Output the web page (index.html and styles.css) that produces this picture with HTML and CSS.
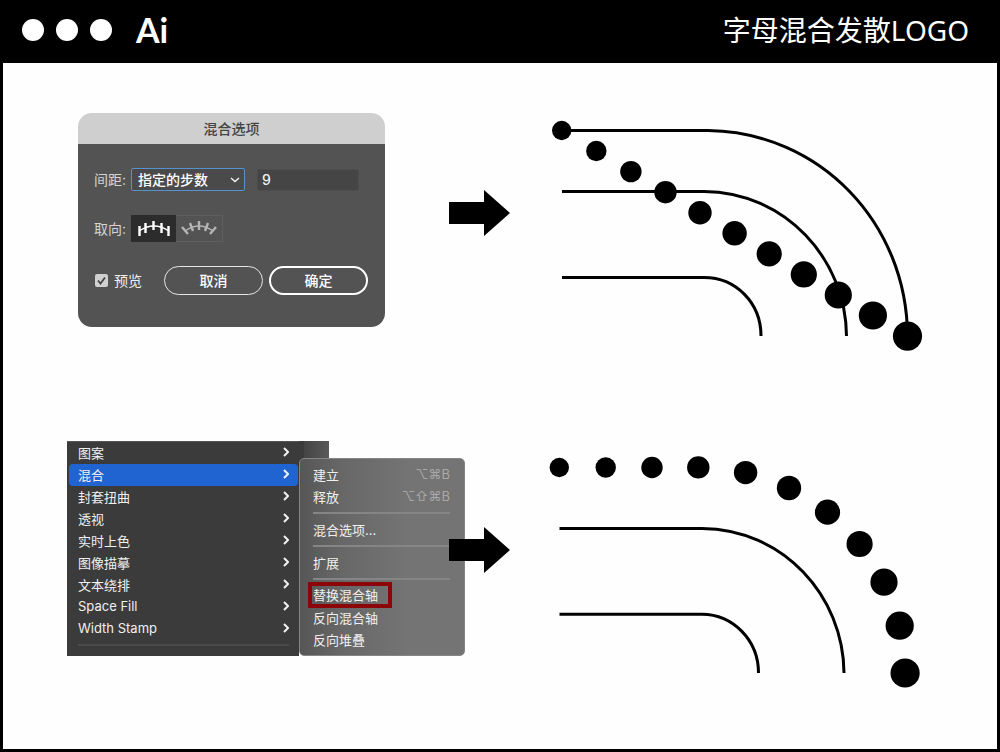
FILE: index.html
```html
<!DOCTYPE html>
<html lang="zh-CN">
<head>
	<meta charset="utf-8">
	<title>字母混合发散LOGO</title>
	<link rel="stylesheet" href="styles.css">
</head>
<body>
	<header class="topbar">
		<span class="dot"></span>
		<span class="dot"></span>
		<span class="dot"></span>
		<strong class="app">Ai</strong>
		<h1>字母混合发散LOGO</h1>
	</header>
	<main>
		<section class="step">
			<form class="dialog">
				<h2>混合选项</h2>
				<div class="dialog-body">
					<div class="row">
						<label for="spacing">间距:</label>
						<span class="select-wrap">
							<select id="spacing">
								<option>指定的步数</option>
							</select>
							<svg class="caret" width="10" height="6" viewBox="0 0 10 6"><path d="M1 1L5 4.500L9 1"/></svg>
						</span>
						<input type="text" class="steps" value="9" aria-label="步数">
					</div>
					<div class="row">
						<span class="label">取向:</span>
						<div class="orient">
							<button type="button" class="active" aria-label="对齐页面">
								<svg width="34" height="18" viewBox="0 0 34 18"><path class="thin" d="M2 11Q17 1 32 11"/><path d="M2.500 6v10M8.500 3v10M16.500 1v9M24.500 3v10M31.500 6v10"/></svg>
							</button>
							<button type="button" aria-label="对齐路径">
								<svg width="36" height="18" viewBox="0 0 36 18"><path class="thin" d="M4 11Q18 1 32 11"/><path d="M1 7l6 7M9 3l3 8M18 1v9M27 3l-3 8M35 7l-6 7"/></svg>
							</button>
						</div>
					</div>
					<div class="row actions">
						<input type="checkbox" id="preview" checked>
						<label for="preview">预览</label>
						<button type="button" class="btn">取消</button>
						<button type="submit" class="btn ok">确定</button>
					</div>
				</div>
			</form>
			<svg class="arrow" viewBox="0 0 61 46"><path d="M0 12H35V0L61 23L35 46V34H0z"/></svg>
			<svg class="diagram" viewBox="0 0 487 337">
				<path d="M52 67.500H198C310 69 397 160 397.500 273"/>
				<path d="M52 128.500H194C275 129 336 196 336.500 273"/>
				<path d="M52 214.500H194C226 214.500 251 240 251 273"/>
				<circle cx="51.700" cy="67.500" r="9.700"/>
				<circle cx="86.300" cy="88" r="10.200"/>
				<circle cx="120.900" cy="108.600" r="10.700"/>
				<circle cx="155.500" cy="129.200" r="11.200"/>
				<circle cx="190" cy="149.800" r="11.700"/>
				<circle cx="224.600" cy="170.300" r="12.200"/>
				<circle cx="259.200" cy="190.900" r="12.600"/>
				<circle cx="293.800" cy="211.400" r="13.100"/>
				<circle cx="328.300" cy="232" r="13.600"/>
				<circle cx="362.900" cy="252.500" r="14.100"/>
				<circle cx="397.500" cy="273.100" r="14.600"/>
			</svg>
		</section>
		<section class="step">
			<div class="menus">
				<ul class="menu">
					<li><a href="#">图案<svg class="chev" viewBox="0 0 6 10"><path d="M1 1l4 4l-4 4"/></svg></a></li>
					<li><a href="#" class="selected">混合<svg class="chev" viewBox="0 0 6 10"><path d="M1 1l4 4l-4 4"/></svg></a></li>
					<li><a href="#">封套扭曲<svg class="chev" viewBox="0 0 6 10"><path d="M1 1l4 4l-4 4"/></svg></a></li>
					<li><a href="#">透视<svg class="chev" viewBox="0 0 6 10"><path d="M1 1l4 4l-4 4"/></svg></a></li>
					<li><a href="#">实时上色<svg class="chev" viewBox="0 0 6 10"><path d="M1 1l4 4l-4 4"/></svg></a></li>
					<li><a href="#">图像描摹<svg class="chev" viewBox="0 0 6 10"><path d="M1 1l4 4l-4 4"/></svg></a></li>
					<li><a href="#">文本绕排<svg class="chev" viewBox="0 0 6 10"><path d="M1 1l4 4l-4 4"/></svg></a></li>
					<li><a href="#">Space Fill<svg class="chev" viewBox="0 0 6 10"><path d="M1 1l4 4l-4 4"/></svg></a></li>
					<li><a href="#">Width Stamp<svg class="chev" viewBox="0 0 6 10"><path d="M1 1l4 4l-4 4"/></svg></a></li>
					<li class="sep"></li>
				</ul>
				<div class="side">
					<div class="strip"></div>
					<ul class="submenu">
						<li><a href="#">建立<kbd>⌥⌘B</kbd></a></li>
						<li><a href="#">释放<kbd>⌥⇧⌘B</kbd></a></li>
						<li class="sep"></li>
						<li><a href="#">混合选项...</a></li>
						<li class="sep"></li>
						<li><a href="#">扩展</a></li>
						<li class="sep"></li>
						<li><a href="#"><span class="mark">替换混合轴</span></a></li>
						<li><a href="#">反向混合轴</a></li>
						<li><a href="#">反向堆叠</a></li>
					</ul>
				</div>
			</div>
			<svg class="arrow" viewBox="0 0 61 46"><path d="M0 12H35V0L61 23L35 46V34H0z"/></svg>
			<svg class="diagram" viewBox="0 0 487 337">
				<path d="M49.500 128.500H192C273 129 333.500 196 334 273"/>
				<path d="M49.500 214.200H192C223 214.500 248.500 240 248.500 273"/>
				<circle cx="49.300" cy="67.500" r="9.700"/>
				<circle cx="95.700" cy="67.500" r="10.200"/>
				<circle cx="142" cy="67.500" r="10.700"/>
				<circle cx="188.300" cy="67.400" r="11.200"/>
				<circle cx="235.600" cy="72.600" r="11.700"/>
				<circle cx="279" cy="88" r="12.200"/>
				<circle cx="317.500" cy="112.200" r="12.600"/>
				<circle cx="349.600" cy="144" r="13.100"/>
				<circle cx="374" cy="182.200" r="13.600"/>
				<circle cx="389.700" cy="225.700" r="14.100"/>
				<circle cx="395.100" cy="273" r="14.600"/>
			</svg>
		</section>
	</main>
</body>
</html>
```
FILE: styles.css
```css
*{
	box-sizing: border-box;
}
body{
	margin: 0;
	min-height: 100vh;
	border: 3px solid #000;
	border-top: none;
	background: #fefefe;
	font-family: Inter, "Noto Sans CJK SC", sans-serif;
	font-size: 13px;
	color: #f0f0f0;
}
h1, h2, ul{
	margin: 0;
	padding: 0;
	font-weight: normal;
}
ul{
	list-style: none;
}
button, input, select{
	margin: 0;
	font: inherit;
	color: inherit;
}

.topbar{
	display: flex;
	align-items: center;
	gap: 12px;
	height: 63px;
	padding: 0 28px 4px 19px;
	background: #000;
	color: #fff;
}
.dot{
	width: 22px;
	height: 22px;
	border-radius: 50%;
	background: #fff;
}
.app{
	margin-left: 12px;
	font-family: Lato, sans-serif;
	font-size: 34px;
	line-height: 58px;
}
.topbar h1{
	margin-left: auto;
	font-family: "Noto Sans", "Noto Sans CJK SC", sans-serif;
	font-size: 28px;
	line-height: 58px;
}

.step{
	display: grid;
	grid-template-columns: 446px 61px 1fr;
	align-items: start;
}
.arrow{
	position: relative;
	width: 61px;
	margin-top: 127px;
}
.diagram{
	width: 100%;
}
.diagram path{
	fill: none;
	stroke: #000;
	stroke-width: 3;
}

/* dialog */
.dialog{
	width: 307px;
	margin: 50px 0 0 75px;
}
.dialog h2{
	border-radius: 14px 14px 0 0;
	background: #cfcfcf;
	color: #444;
	font-size: 14px;
	font-weight: 500;
	line-height: 31px;
	text-align: center;
}
.dialog-body{
	display: flex;
	flex-direction: column;
	gap: 24px;
	padding: 24px 16px 32px;
	border-radius: 0 0 14px 14px;
	background: #535353;
	font-size: 14px;
}
.row{
	display: flex;
	align-items: center;
	gap: 5px;
}
.row label, .row .label{
	line-height: 22px;
	color: #d4d4d4;
}
.select-wrap{
	position: relative;
	display: flex;
	margin-right: 7px;
}
.select-wrap select{
	width: 114px;
	height: 23px;
	padding: 0 6px;
	appearance: none;
	border: 1px solid #5592cf;
	border-radius: 2px;
	background: #4a4a4a;
	color: #fff;
	font-weight: 500;
}
.caret{
	position: absolute;
	right: 5px;
	top: 9px;
	pointer-events: none;
}
.caret path, .chev path{
	fill: none;
	stroke: #f0f0f0;
	stroke-width: 1.5;
}
.steps{
	width: 102px;
	height: 22px;
	padding: 0 4px;
	border: 1px solid #4c4c4c;
	border-radius: 2px;
	background: #454545;
	font-weight: 500;
}
.orient{
	display: flex;
}
.orient button{
	display: flex;
	align-items: center;
	justify-content: center;
	width: 47px;
	height: 27px;
	padding: 0;
	border: 1px solid #5e5e5e;
	border-left: none;
	background: none;
}
.orient .active{
	width: 45px;
	border: none;
	background: #2c2c2c;
}
.orient path{
	fill: none;
	stroke: #b4b4b4;
	stroke-width: 2.4;
}
.orient .active path{
	stroke: #fff;
}
.orient .thin, .orient .active .thin{
	stroke-width: 1.4;
}
.actions{
	gap: 6px;
	padding-left: 1px;
}
.actions input{
	width: 13px;
	height: 13px;
	appearance: none;
	border-radius: 2px;
	background: #d0d0d0 url("data:image/svg+xml,%3Csvg xmlns='http://www.w3.org/2000/svg' viewBox='0 0 13 13'%3E%3Cpath d='M3 6.500l2.500 3l4.500-6' fill='none' stroke='%23444' stroke-width='1.800'/%3E%3C/svg%3E");
}
.actions label{
	margin-right: 16px;
	color: #f0f0f0;
}
.btn{
	width: 99px;
	height: 29px;
	padding: 0 0 2px;
	border: 1px solid #e6e6e6;
	border-radius: 15px;
	background: none;
	color: #fff;
	font-weight: 500;
}
.btn.ok{
	border: 2px solid #fff;
}

/* menus */
.menus{
	display: flex;
	margin: 41px 0 0 64px;
}
.menus a{
	display: flex;
	align-items: center;
	height: 22px;
	padding-bottom: 2px;
	color: inherit;
	text-decoration: none;
	white-space: nowrap;
}
.menu{
	flex: none;
	width: 232px;
	padding: 0 1px 0 2px;
	border-top: 1px solid #555;
	background: #3b3b3b;
}
.menu a{
	padding: 0 9px 2px;
	border-radius: 4px;
}
.menu .selected{
	background: #1f64d0;
}
.chev{
	width: 6px;
	height: 10px;
	margin-left: auto;
}
.chev path{
	stroke-width: 2;
}
.sep{
	height: 11px;
	padding-top: 4px;
}
.sep::before{
	content: "";
	display: block;
	height: 2px;
	background: #858585;
}
.menu .sep{
	height: 15px;
	margin: 0 9px;
}
.menu .sep::before{
	background: #4b4b4b;
}
.side{
	flex: none;
	width: 166px;
}
/* runs on under the submenu's rounded corner */
.strip{
	width: 30px;
	height: 22px;
	margin-bottom: -5px;
	border-left: 5px solid #3b3b3b;
	background: linear-gradient(90deg, #444, #5a5a5a);
}
.submenu{
	position: relative;
	padding: 5px 14px 4px 13px;
	border: 1px solid #858585;
	border-radius: 5px;
	background: linear-gradient(90deg, #565656, #676767 25%, #747474 65%);
}
.submenu kbd{
	margin-left: auto;
	font-family: Inter, "DejaVu Sans", sans-serif;
	color: #a8a8a8;
}
.mark{
	margin-left: -1px;
	padding: 0 10px 0 1px;
	line-height: 18px;
	outline: 4px solid #8c0508;
}
```
